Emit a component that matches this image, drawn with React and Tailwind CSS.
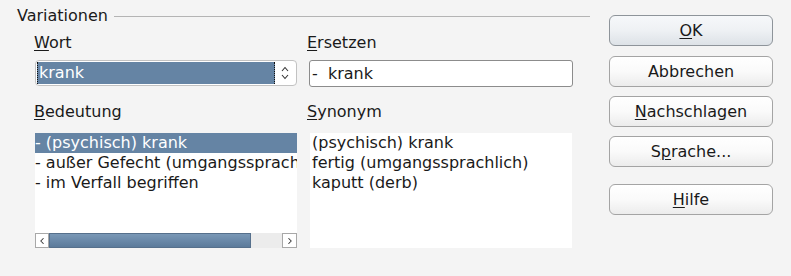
import { ChevronLeft, ChevronRight } from "lucide-react";

const MEANINGS = ["- (psychisch) krank", "- außer Gefecht (umgangssprachlich)", "- im Verfall begriffen"];
const SYNONYMS = ["(psychisch) krank", "fertig (umgangssprachlich)", "kaputt (derb)"];

function Label({ mnemonic, rest }) {
  return (
    <div className="h-[20px] leading-[20px]">
      <u className="decoration-1 underline-offset-2">{mnemonic}</u>
      {rest}
    </div>
  );
}

function Spin() {
  return (
    <svg width="10" height="16" viewBox="0 0 10 16" fill="none" stroke="#333" strokeWidth="1.1">
      <path d="M2 6 L5 2.5 L8 6" />
      <path d="M2 10 L5 13.5 L8 10" />
    </svg>
  );
}

function DialogButton({ children, def, className = "" }) {
  return (
    <button
      className={`w-[164px] h-[31px] rounded-[6px] border text-[#1a1a1a] leading-none ${
        def
          ? "border-[#8e949a] bg-linear-to-b from-[#f6f8fa] via-[#eef1f4] to-[#dde2e7]"
          : "border-[#a4a4a4] bg-linear-to-b from-white via-[#fafafa] to-[#ececec]"
      } ${className}`}
    >
      {children}
    </button>
  );
}

export default function App() {
  return (
    <div
      className="w-[791px] h-[276px] bg-[#f4f4f4] flex text-[16px] text-[#1a1a1a]"
      style={{ fontFamily: '"DejaVu Sans", "Liberation Sans", sans-serif' }}
    >
      {/* Left: Variationen group */}
      <div className="w-[590px] pl-[17px] flex flex-col">
        <div className="mt-[6px] h-[20px] flex items-center gap-[6px]">
          <span className="leading-[20px]">Variationen</span>
          <div className="flex-1 h-px bg-[#b4b4b4]" />
        </div>

        <div className="ml-[17px] mt-[7px] flex gap-[9px]">
          {/* Column: Wort / Bedeutung */}
          <div className="w-[264px] flex flex-col">
            <Label mnemonic="W" rest="ort" />
            <div className="mt-[7px] ml-[1px] w-[262px] h-[26px] rounded-[4px] border border-[#c2c2c2] bg-white flex items-stretch p-px">
              <div className="flex-1 bg-[#6584a4] border-x border-dotted border-[#111] text-white pl-px leading-[22px]">
                krank
              </div>
              <div className="w-[20px] flex items-center justify-center">
                <Spin />
              </div>
            </div>
            <div className="mt-[16px]">
              <Label mnemonic="B" rest="edeutung" />
            </div>
            <div className="mt-[11px] ml-[1px] w-[262px] h-[115px] bg-white flex flex-col">
              <div className="h-[100px] overflow-hidden whitespace-nowrap">
                {MEANINGS.map((m, i) => (
                  <div
                    key={m}
                    className={`h-[20px] leading-[20px] ${i === 0 ? "bg-[#6584a4] text-white" : ""}`}
                  >
                    {m}
                  </div>
                ))}
              </div>
              <div className="h-[15px] flex">
                <div className="w-[14px] border border-[#a8a8a8] bg-white flex items-center justify-center">
                  <ChevronLeft size={10} strokeWidth={2.5} color="#333" />
                </div>
                <div className="w-[202px] border border-[#56708c] bg-linear-to-b from-[#7a98b6] via-[#6a89a9] to-[#5c7b9b]" />
                <div className="flex-1 bg-[#ececec]" />
                <div className="w-[15px] border border-[#a8a8a8] bg-white flex items-center justify-center">
                  <ChevronRight size={10} strokeWidth={2.5} color="#333" />
                </div>
              </div>
            </div>
          </div>

          {/* Column: Ersetzen / Synonym */}
          <div className="w-[266px] flex flex-col">
            <Label mnemonic="E" rest="rsetzen" />
            <div className="mt-[7px] ml-[2px] w-[264px] h-[27px] rounded-[3px] border border-[#8c8c8c] bg-white pl-[2px] leading-[25px] whitespace-pre">
              {"-  krank"}
            </div>
            <div className="mt-[15px]">
              <Label mnemonic="S" rest="ynonym" />
            </div>
            <div className="mt-[11px] ml-[3px] w-[262px] h-[115px] bg-white pl-[2px]">
              {SYNONYMS.map((s) => (
                <div key={s} className="h-[20px] leading-[20px] whitespace-nowrap">
                  {s}
                </div>
              ))}
            </div>
          </div>
        </div>
      </div>

      {/* Right: buttons */}
      <div className="ml-[19px] pt-[15px] flex flex-col">
        <DialogButton def>
          <u className="decoration-1 underline-offset-2">O</u>K
        </DialogButton>
        <DialogButton className="mt-[10px]">Abbrechen</DialogButton>
        <DialogButton className="mt-[9px]">
          <u className="decoration-1 underline-offset-2">N</u>achschlagen
        </DialogButton>
        <DialogButton className="mt-[9px]">
          S<u className="decoration-1 underline-offset-2">p</u>rache...
        </DialogButton>
        <DialogButton className="mt-[17px]">
          <u className="decoration-1 underline-offset-2">H</u>ilfe
        </DialogButton>
      </div>
    </div>
  );
}
